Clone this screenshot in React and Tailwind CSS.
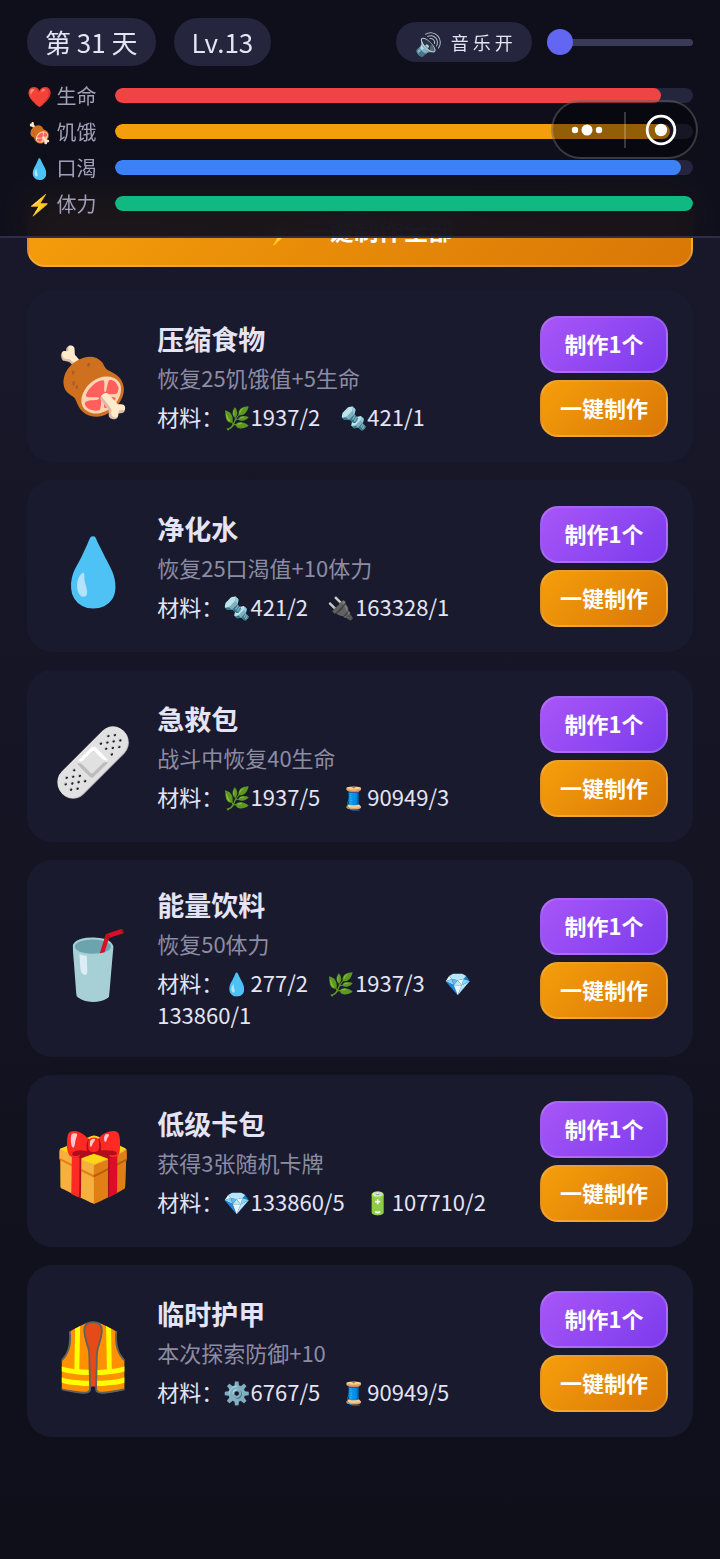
import { useState } from 'react';

const stats = [
  { id: 'hp', icon: '❤️', label: '生命', value: 94.5, color: 'bg-[#ef4444]' },
  { id: 'hunger', icon: '🍖', label: '饥饿', value: 96, color: 'bg-[#f59e0b]' },
  { id: 'thirst', icon: '💧', label: '口渴', value: 98, color: 'bg-[#3b82f6]' },
  { id: 'stamina', icon: '⚡', label: '体力', value: 100, color: 'bg-[#10b981]' },
];

const recipes = [
  { icon: '🍖', name: '压缩食物', desc: '恢复25饥饿值+5生命', materials: ['🌿1937/2', '🔩421/1'] },
  { icon: '💧', name: '净化水', desc: '恢复25口渴值+10体力', materials: ['🔩421/2', '🔌163328/1'] },
  { icon: '🩹', name: '急救包', desc: '战斗中恢复40生命', materials: ['🌿1937/5', '🧵90949/3'] },
  { icon: '🥤', name: '能量饮料', desc: '恢复50体力', materials: ['💧277/2', '🌿1937/3', '💎133860/1'] },
  { icon: '🎁', name: '低级卡包', desc: '获得3张随机卡牌', materials: ['💎133860/5', '🔋107710/2'] },
  { icon: '🦺', name: '临时护甲', desc: '本次探索防御+10', materials: ['⚙️6767/5', '🧵90949/5'] },
];

// non-breaking spaces keep the gap, the last one lets the line wrap
const MATERIAL_GAP = '\u00a0\u00a0\u00a0 ';

function StatRow({ stat }) {
  return (
    <div className="flex items-center">
      <span id={stat.id} className="w-22 shrink-0 text-[20px] leading-[29px] text-[#a0a0b8] whitespace-nowrap">
        {stat.icon} {stat.label}
      </span>
      <div
        role="progressbar"
        aria-labelledby={stat.id}
        aria-valuenow={stat.value}
        className="h-[15px] flex-1 overflow-hidden rounded-full bg-[#25253d]"
      >
        <div className={`h-full rounded-full ${stat.color}`} style={{ width: `${stat.value}%` }} />
      </div>
    </div>
  );
}

function RecipeCard({ recipe }) {
  return (
    <li className="flex min-h-[172px] items-center gap-[23px] rounded-[25px] bg-[#1a1a2e] p-[25px]">
      <span className="shrink-0 text-[66px] leading-none">{recipe.icon}</span>
      <div className="min-w-0 flex-1 pb-0.5">
        <h2 className="text-[27px] leading-[39px] font-bold">{recipe.name}</h2>
        <p className="mt-[3px] text-[22px] leading-8 text-[#8c8ca4]">{recipe.desc}</p>
        <p className="mt-[7px] text-[22px] leading-8">{`材料：${recipe.materials.join(MATERIAL_GAP)}`}</p>
      </div>
      <div className="flex w-32 shrink-0 flex-col gap-[7px]">
        <button className="h-[57px] rounded-[18px] border-2 border-white/15 bg-linear-135 from-[#a855f7] to-[#7c3aed] pb-0.5 text-[22px] font-bold text-white">
          制作1个
        </button>
        <button className="h-[57px] rounded-[18px] border-2 border-white/15 bg-linear-135 from-[#f59e0b] to-[#d97706] pb-0.5 text-[22px] font-bold text-white">
          一键制作
        </button>
      </div>
    </li>
  );
}

export default function App() {
  const [volume, setVolume] = useState(0);

  return (
    <div className="min-h-screen bg-linear-to-b from-[#1a1a2e] to-[#0f0f1a] font-['Noto_Sans_CJK_SC','Noto_Color_Emoji',sans-serif] text-[#e4e4f4]">
      <header className="sticky top-0 z-10 border-b-2 border-[#2d2d44] bg-[#0f0f1a]/95 px-[27px] pt-[18px] pb-[18px] backdrop-blur-lg">
        <div className="flex items-center justify-between">
          <div className="flex gap-[18px] text-[26px] leading-9">
            <span className="rounded-full bg-[#25253d] px-[18px] py-1.5">第 31 天</span>
            <span className="rounded-full bg-[#25253d] px-[18px] py-1.5">Lv.13</span>
          </div>
          <div className="flex items-center gap-[15px]">
            <button className="flex h-10 w-34 items-center justify-center gap-2 rounded-full bg-[#25253d] text-[18px]">
              <span className="text-[22px]">🔊</span>
              <span>音 乐 开</span>
            </button>
            <input
              type="range"
              aria-label="音量"
              min="0"
              max="100"
              value={volume}
              onChange={e => setVolume(Number(e.target.value))}
              className="h-[7px] w-[146px] appearance-none rounded-full bg-[#3a3a58] [&::-webkit-slider-thumb]:size-[26px] [&::-webkit-slider-thumb]:appearance-none [&::-webkit-slider-thumb]:rounded-full [&::-webkit-slider-thumb]:bg-[#6366f1]"
            />
          </div>
        </div>

        <div className="mt-[15px] flex flex-col gap-[7px]">
          {stats.map(stat => (
            <StatRow key={stat.id} stat={stat} />
          ))}
        </div>

        {/* Mini program capsule */}
        <div className="absolute top-[100px] right-[22px] flex h-[59px] w-[147px] items-center rounded-full border-2 border-white/20 bg-black/40">
          <button aria-label="更多" className="flex h-full flex-1 items-center justify-center">
            <svg width="34" height="12" viewBox="0 0 34 12" fill="white">
              <circle cx="4" cy="6" r="3.2" />
              <circle cx="16" cy="6" r="5.5" />
              <circle cx="28" cy="6" r="3.2" />
            </svg>
          </button>
          <span className="h-9 w-0.5 bg-white/20" />
          <button aria-label="关闭" className="flex h-full flex-1 items-center justify-center">
            <svg width="32" height="32" viewBox="0 0 32 32">
              <circle cx="16" cy="16" r="13.8" fill="none" stroke="white" strokeWidth="2.8" />
              <circle cx="16" cy="16" r="6.2" fill="white" />
            </svg>
          </button>
        </div>
      </header>

      <main className="-mt-[45px] px-[27px] pb-[121px]">
        <button className="h-[74px] w-full rounded-[18px] border-2 border-white/15 bg-linear-135 from-[#f59e0b] to-[#d97706] text-[25px] font-bold text-white">
          ⚡ 一键制作全部
        </button>
        <ul className="mt-[23px] flex flex-col gap-[18px]">
          {recipes.map(recipe => (
            <RecipeCard key={recipe.name} recipe={recipe} />
          ))}
        </ul>
      </main>
    </div>
  );
}
